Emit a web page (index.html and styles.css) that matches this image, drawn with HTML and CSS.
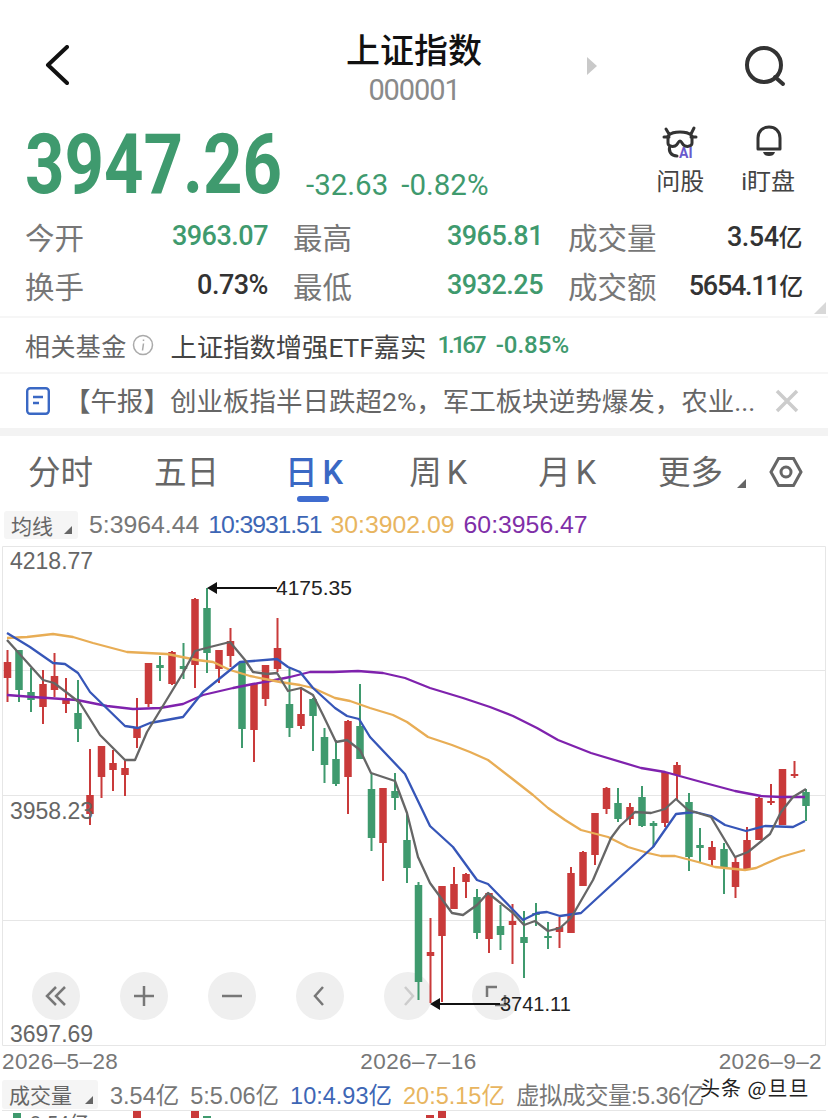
FILE: index.html
```html
<!DOCTYPE html>
<html lang="zh-CN">
<head>
  <meta charset="UTF-8" />
  <meta name="viewport" content="width=device-width, initial-scale=1.0"/>
  <title>上证指数</title>
  <link rel="stylesheet" href="styles.css">
</head>
<body>
  <div class="page">

    <header class="topbar">
      <svg class="back" width="24" height="40" viewBox="0 0 24 40"><path d="M22 2 3 20l19 18" /></svg>
      <div class="title">
        <h1>上证指数</h1>
        <div class="code">000001</div>
      </div>
      <div class="topbar-right">
        <span class="next-arrow"></span>
        <svg class="search" width="42" height="42" viewBox="0 0 42 42"><circle cx="20" cy="20" r="17" /><path d="M31 32l8 7" /></svg>
      </div>
    </header>

    <section class="quote">
      <div class="price">3947.26</div>
      <div class="change"><span>-32.63</span><span>-0.82%</span></div>
      <div class="quote-actions">
        <div class="action">
          <svg width="36" height="36" viewBox="0 0 36 36">
            <path class="ink" d="M4 4l3 5M32 3l-3 6M7 10C11 6 25 6 29 10M2 12h5M29 12h5" />
            <path class="ink" d="M6 11v7c0 3 4 4 7 3 3-1 3-5 5-5s2 4 5 5c3 1 7 0 7-3v-7M8 21c-2 5 1 10 7 10" />
            <text class="ai" x="17" y="33">AI</text>
          </svg>
          <span>问股</span>
        </div>
        <div class="action">
          <svg width="36" height="36" viewBox="0 0 36 36">
            <path class="ink" d="M8 24V13C8 6 13 2 19 2s11 4 11 11v11z" />
            <path class="fill" d="M13 27h12c-1 3-3 4-6 4s-5-1-6-4z" />
          </svg>
          <span>i盯盘</span>
        </div>
      </div>
    </section>

    <section class="stats">
      <div class="stat"><span class="label">今开</span><span class="value down">3963.07</span></div>
      <div class="stat"><span class="label">最高</span><span class="value down">3965.81</span></div>
      <div class="stat"><span class="label">成交量</span><span class="value">3.54<small>亿</small></span></div>
      <div class="stat"><span class="label">换手</span><span class="value">0.73%</span></div>
      <div class="stat"><span class="label">最低</span><span class="value down">3932.25</span></div>
      <div class="stat"><span class="label">成交额</span><span class="value value-tight">5654.11<small>亿</small></span></div>
      <span class="corner"></span>
    </section>

    <section class="fund">
      <span class="fund-label">相关基金</span>
      <svg class="info" width="22" height="22" viewBox="0 0 22 22"><circle cx="11" cy="11" r="9.5" /><path d="M11.5 5.5v1.5M11.5 9.5l-1 7" /></svg>
      <span class="fund-name">上证指数增强ETF嘉实</span>
      <span class="fund-num fund-price down">1.167</span>
      <span class="fund-num down">-0.85%</span>
    </section>

    <section class="news">
      <svg class="doc" width="24" height="28" viewBox="0 0 24 28"><rect x="1.2" y="1.2" width="21.6" height="25.6" rx="3" /><path d="M7 10h10M7 16h6" /></svg>
      <span class="news-text">【午报】创业板指半日跌超2%，军工板块逆势爆发，农业...</span>
      <svg class="close" width="24" height="24" viewBox="0 0 24 24"><path d="M2 2l20 20M22 2 2 22" /></svg>
    </section>

    <nav class="tabs">
      <span class="tab tab-1">分时</span>
      <span class="tab tab-2">五日</span>
      <span class="tab tab-3 active">日 K</span>
      <span class="tab tab-4">周 K</span>
      <span class="tab tab-5">月 K</span>
      <span class="tab tab-6">更多<i class="tri"></i></span>
      <svg class="hex" width="34" height="32" viewBox="0 0 34 32"><path d="M9.5 2.5h15L32 16l-7.500 13.500h-15L2 16z" /><circle cx="17" cy="16" r="5" /></svg>
    </nav>

    <div class="legend">
      <span class="pill">均线<i class="tri"></i></span>
      <span class="ma5">5:3964.44</span>
      <span class="ma10">10:3931.51</span>
      <span class="ma30">30:3902.09</span>
      <span class="ma60">60:3956.47</span>
    </div>

    <div class="chart">
      <div class="controls">
        <span class="ctl"><svg width="24" height="24" viewBox="0 0 24 24"><path d="M12 3 3 12l9 9M21 3l-9 9 9 9" /></svg></span>
        <span class="ctl"><svg width="24" height="24" viewBox="0 0 24 24"><path d="M12 2v20M2 12h20" /></svg></span>
        <span class="ctl"><svg width="24" height="24" viewBox="0 0 24 24"><path d="M2 12h20" /></svg></span>
        <span class="ctl"><svg width="24" height="24" viewBox="0 0 24 24"><path d="M15 3l-8 9 8 9" /></svg></span>
        <span class="ctl off"><svg width="24" height="24" viewBox="0 0 24 24"><path d="M9 3l8 9-8 9" /></svg></span>
        <span class="ctl"><svg width="24" height="24" viewBox="0 0 24 24"><path d="M3 13V3h10M21 11v10H11" /></svg></span>
      </div>

      <svg class="plot" width="828" height="500" viewBox="0 546 828 500">
        <path class="grid" d="M2.500 546.500H825.500V1045.500H2.500ZM3 670.500H825M3 795.500H825M3 920.500H825" />

        <path class="wick red" d="M7.500 650V702M43 670V724M54.500 653V697M66 678V713M90 749V825M101.500 746V798M113 750V791M125 760V796M137 698V748M148.500 663V707M172 651V685M195 598V688M219 650V683M230.500 628V667M254 683V762M265.500 665V706M277.500 618V672M301 687V729M348 720V814M383 788V881M430.500 918V1003M442 886V1002M454 867V909M466 873V898M489 893V953M512.500 904V964M559.500 917V948M571 867V933M583 851V886M595 813V865M606.500 787V814M630 803V825M665 772V827M677 762V800M712 841V867M735.500 857V898M747 827V869M759 797V840M771 784V805M782.500 769V825M794.500 761V778" />
        <path class="body red" d="M7.500 662V678M43 684V707M54.500 676V690M66 698V704M90 795V814M101.500 746V777M113 763V770M125 768V775M137 728V738M148.500 663V704M172 652V684M195 599V665M219 650V669M230.500 641V656M254 684V730M265.500 665V699M277.500 648V669M301 714V726M348 721V777M383 788V843M430.500 952V956M442 886V936M454 884V909M466 874V882M489 893V939M512.500 921V925M559.500 927V932M571 873V933M583 852V886M595 813V855M606.500 788V809M630 807V819M665 772V823M677 765V775M712 847V860M735.500 862V887M747 840V869M759 798V840M771 801V803M782.500 769V825M794.500 774V776" />
        <path class="wick green" d="M19 650V702M31 668V712M78 680V742M160 656V681M183.500 643V679M207 588V673M242 662V748M289.500 668V737M313 698V751M324.500 728V783M336 740V786M360 684V759M371.500 773V851M395 773V810M407 813V883M418.500 882V1000M477 889V939M500.500 905V950M524 911V978M536 903V926M548 922V949M618 788V822M642 786V827M653.500 821V847M689 793V871M700 828V863M724 843V894M806 789V821" />
        <path class="body green" d="M19 650V690M31 692V700M78 713V729M160 665V668M183.500 666V669M207 608V653M242 662V729M289.500 704V728M313 699V716M324.500 737V765M336 759V784M360 726V759M371.500 789V838M395 791V798M407 840V868M418.500 885V982M477 897V933M500.500 926V935M524 937V943M536 913V915M548 936V938M618 803V819M642 797V826M653.500 823V826M689 802V857M700 845V848M724 849V868M806 792V806" />

        <polyline class="line l60" points="7,695 33,697 77,700 107,706 133,709 160,708 183,704 203,695 233,688 253,684 270,681 290,677 310,672 333,672 358,671 383,673 405,678 430,688 463,698 490,707 513,716 537,728 558,740 591,753 641,768 665,772 705,783 735,791 761,796 781,797 805,797" />
        <polyline class="line l30" points="7,638 27,637 53,634 73,637 93,643 127,652 167,654 197,660 213,662 230,670 250,676 270,680 280,682 300,685 313,688 335,698 350,701 370,708 393,715 407,722 428,737 452,745 470,752 488,760 510,777 533,795 548,808 565,820 581,830 608,837 628,847 648,853 661,856 675,856 698,862 715,867 745,870 756,868 781,857 805,850" />
        <polyline class="line l10" points="7,633 30,647 53,663 65,664 78,673 90,692 125,726 138,728 150,723 183,717 203,692 240,662 253,661 277,659 288,667 300,672 313,688 335,708 347,716 359,719 370,737 405,774 430,826 453,847 477,880 488,884 523,920 537,913 547,912 560,916 581,913 606,890 653,847 676,814 695,812 711,816 725,825 746,831 765,826 793,827 805,821" />
        <polyline class="line l5" points="7,640 43,680 54,683 66,692 80,703 100,735 125,760 135,760 147,732 183,673 195,651 210,647 230,642 245,660 253,672 267,674 277,673 288,691 301,688 313,695 323,715 336,742 347,740 360,750 371,773 395,781 407,813 418,857 430,883 452,913 463,915 477,905 488,893 513,913 524,925 535,921 548,931 560,928 571,918 593,880 611,838 620,826 635,812 651,813 665,809 676,799 688,810 711,817 735,857 748,852 770,834 781,812 793,797 806,789" />

        <text class="axis" x="10" y="569">4218.77</text>
        <text class="axis" x="10" y="819">3958.23</text>
        <text class="axis" x="10" y="1042">3697.69</text>

        <path class="mark" d="M214 588H277M438 1004H500" />
        <path class="head" d="M207 588l10-6v12zM430 1004l10-6v12z" />
        <text class="peak" x="276" y="595">4175.35</text>
        <text class="peak peak-low" x="500" y="1011">3741.11</text>
      </svg>
    </div>

    <div class="dates">
      <span>2026–5–28</span>
      <span>2026–7–16</span>
      <span>2026–9–2</span>
    </div>

    <div class="volume">
      <span class="pill pill-wide">成交量<i class="tri"></i></span>
      <span class="ma5">3.54亿</span>
      <span class="ma5">5:5.06亿</span>
      <span class="ma10">10:4.93亿</span>
      <span class="ma30">20:5.15亿</span>
      <span class="ma5 vol-virtual">虚拟成交量:5.36亿</span>
      <span class="watermark">头条 @旦旦</span>
    </div>

    <div class="vol-strip">
      <span class="vol-axis">3.54亿</span>
      <i class="bar green-bar bar-a"></i>
      <i class="bar red-bar bar-b"></i>
      <i class="bar red-bar bar-c"></i>
      <i class="bar green-bar bar-d"></i>
      <i class="bar red-bar bar-e"></i>
      <i class="bar red-bar bar-f"></i>
    </div>
  </div>
</body>
</html>
```

FILE: styles.css
```css
* {
  box-sizing: border-box;
}
body {
  margin: 0;
  background-color: #fff;
  font-family: Roboto, "Noto Sans CJK SC", sans-serif;
  color: #333;
}
svg {
  display: block;
  fill: none;
}
.page {
  width: 828px;
  height: 1118px;
  overflow: hidden;
}
.down {
  color: #3f9a6e;
}

/* top bar */
.topbar {
  height: 120px;
  display: grid;
  grid-template-columns: 1fr auto 1fr;
  align-items: start;
}
.back {
  margin: 45px 0 0 45px;
}
.back path {
  stroke: #111;
  stroke-width: 4;
  stroke-linecap: round;
  stroke-linejoin: round;
}
.title {
  padding-top: 28px;
  text-align: center;
}
h1 {
  margin: 0;
  font-size: 34px;
  line-height: 46px;
  font-weight: 500;
  color: #111;
}
.code {
  font-size: 29px;
  line-height: 32px;
  color: #8a8a8a;
  letter-spacing: -1.100px;
}
.topbar-right {
  display: flex;
  justify-content: space-between;
  padding: 45px 42px 0 105px;
}
.next-arrow {
  margin-top: 12px;
  width: 0;
  height: 0;
  border-left: 10px solid #c9c9c9;
  border-top: 9px solid transparent;
  border-bottom: 9px solid transparent;
}
.search circle,
.search path {
  stroke: #333;
  stroke-width: 4;
  stroke-linecap: round;
}

/* price */
.quote {
  height: 91px;
  display: flex;
  align-items: flex-start;
  padding-left: 25px;
}
.price {
  width: 281px;
  font-size: 84px;
  line-height: 90px;
  font-weight: 700;
  color: #3f9a6e;
  transform: scaleX(0.82);
  transform-origin: left;
  white-space: nowrap;
}
.change {
  margin-top: 48px;
  display: flex;
  gap: 13px;
  font-size: 29.500px;
  line-height: 34px;
  color: #3f9a6e;
}
.quote-actions {
  margin-left: auto;
  margin-right: 33px;
  display: flex;
  gap: 37px;
  padding-top: 5px;
}
.action {
  display: flex;
  flex-direction: column;
  align-items: center;
  font-size: 24px;
  line-height: 32px;
  color: #444;
}
.action svg {
  margin-bottom: 5px;
}
.ink {
  stroke: #333;
  stroke-width: 3;
  stroke-linecap: round;
  stroke-linejoin: round;
}
.fill {
  fill: #333;
}
.ai {
  fill: #6a5acd;
  font-size: 14px;
  font-weight: 700;
}

/* stats */
.stats {
  position: relative;
  height: 105px;
  display: grid;
  grid-template-columns: 243px 250px 234px;
  column-gap: 25px;
  grid-auto-rows: 49px;
  padding-left: 25px;
}
.stat {
  display: flex;
  align-items: center;
  justify-content: space-between;
}
.label {
  font-size: 29.500px;
  color: #777;
}
.value {
  font-size: 27px;
  font-weight: 500;
  letter-spacing: -0.500px;
}
.value small {
  font-size: 24px;
}
.value-tight {
  letter-spacing: -1.300px;
}
.corner {
  position: absolute;
  right: 2px;
  bottom: 2px;
  width: 0;
  height: 0;
  border-left: 12px solid transparent;
  border-bottom: 12px solid #d8d8d8;
}

/* fund + news */
.fund {
  height: 58px;
  display: flex;
  align-items: center;
  padding-left: 25px;
  border-top: 2px solid #f6f6f6;
  border-bottom: 2px solid #f6f6f6;
}
.fund-label {
  font-size: 25px;
  letter-spacing: 0.400px;
  color: #666;
}
.info {
  margin: 0 17px 0 5px;
}
.info circle,
.info path {
  stroke: #aaa;
  stroke-width: 1.500;
}
.fund-name {
  font-size: 26.300px;
  color: #444;
  margin-right: 11px;
}
.fund-num {
  font-size: 24px;
  font-weight: 500;
}
.fund-price {
  letter-spacing: -3px;
  margin-right: 12px;
}
.news {
  height: 54px;
  display: flex;
  align-items: center;
  padding-left: 26px;
}
.doc rect,
.doc path {
  stroke: #3a68c4;
  stroke-width: 2.400;
}
.news-text {
  margin: -3px 0 0 14px;
  width: 711px;
  font-size: 26.500px;
  color: #666;
  white-space: nowrap;
}
.close {
  flex: none;
}
.close path {
  stroke: #ccc;
  stroke-width: 3.500;
}

/* tabs */
.tabs {
  position: relative;
  height: 82px;
  display: flex;
  align-items: center;
  border-top: 8px solid #f3f3f3;
}
.tab {
  position: relative;
  font-size: 32.500px;
  line-height: 44px;
  color: #666;
  white-space: nowrap;
  word-spacing: -3px;
}
.tab-1 {
  margin-left: 28px;
}
.tab-2 {
  margin-left: 61px;
}
.tab-3 {
  margin-left: 66px;
}
.tab-4 {
  margin-left: 66px;
}
.tab-5 {
  margin-left: 71px;
}
.tab-6 {
  margin-left: 62px;
}
.active {
  color: #3a68c4;
  font-weight: 500;
}
.active::after {
  content: "";
  position: absolute;
  left: 12px;
  right: 14px;
  bottom: -7px;
  height: 6px;
  border-radius: 3px;
  background-color: #3f6ccf;
}
.tri {
  position: absolute;
  right: -23px;
  bottom: 7px;
  width: 0;
  height: 0;
  border-left: 9px solid transparent;
  border-bottom: 9px solid #666;
}
.hex {
  position: absolute;
  left: 769px;
  top: 20px;
}
.hex path,
.hex circle {
  stroke: #666;
  stroke-width: 3;
}

/* legend rows */
.legend,
.volume {
  display: flex;
  align-items: center;
  font-family: "Liberation Sans", "Noto Sans CJK SC", sans-serif;
  white-space: nowrap;
}
.legend {
  height: 36px;
  gap: 9px;
  padding: 0 0 6px 4px;
  font-size: 24.800px;
}
.legend .ma10 {
  letter-spacing: -1.100px;
}
.pill {
  position: relative;
  width: 74px;
  height: 28px;
  padding-left: 7px;
  margin-right: 2px;
  border-radius: 3px;
  background-color: #f5f5f5;
  font-family: "Noto Sans CJK SC", sans-serif;
  font-size: 21px;
  line-height: 28px;
  color: #666;
}
.pill .tri {
  right: 6px;
  bottom: 5px;
  border-left-width: 8px;
  border-bottom-width: 8px;
}
.ma5 {
  color: #777;
}
.ma10 {
  color: #3d66b5;
}
.ma30 {
  color: #e8b560;
}
.ma60 {
  color: #7f2fa8;
}

/* chart */
.chart {
  position: relative;
  height: 500px;
}
.controls {
  position: absolute;
  left: 32px;
  top: 426px;
  display: flex;
  gap: 40px;
}
.ctl {
  width: 48px;
  height: 48px;
  display: flex;
  align-items: center;
  justify-content: center;
  border-radius: 50%;
  background-color: #efefef;
}
.ctl path {
  stroke: #777;
  stroke-width: 2.500;
}
.ctl.off path {
  stroke: #ccc;
}
.plot {
  position: relative;
}
.grid {
  stroke: #e6e6e6;
  stroke-width: 1;
}
.wick {
  stroke-width: 2;
}
.body {
  stroke-width: 7.500;
}
.red {
  stroke: #c93a3a;
}
.green {
  stroke: #3f9a6e;
}
.line {
  stroke-width: 2.300;
  stroke-linejoin: round;
}
.l5 {
  stroke: #666;
}
.l10 {
  stroke: #3656b8;
}
.l30 {
  stroke: #e8ad55;
}
.l60 {
  stroke: #7f22ad;
}
.axis {
  fill: #666;
  font-family: "Liberation Sans", sans-serif;
  font-size: 23px;
}
.peak {
  fill: #222;
  font-family: "Liberation Sans", sans-serif;
  font-size: 21px;
}
.peak-low {
  font-size: 20px;
}
.mark {
  stroke: #111;
  stroke-width: 2;
}
.head {
  fill: #111;
}

/* below the chart */
.dates {
  height: 32px;
  display: flex;
  justify-content: space-between;
  align-items: center;
  padding: 0 6px 0 2px;
  font-family: "Liberation Sans", sans-serif;
  font-size: 22.500px;
  letter-spacing: 0.400px;
  color: #777;
}
.volume {
  position: relative;
  height: 32px;
  gap: 11px;
  padding-left: 2px;
  font-size: 23.500px;
}
.vol-virtual {
  letter-spacing: -0.500px;
}
.pill-wide {
  width: 96px;
  height: 29px;
  margin-right: 1px;
}
.pill-wide .tri {
  right: 5px;
}
.watermark {
  position: absolute;
  left: 700px;
  top: -6px;
  font-family: "Noto Sans CJK SC", sans-serif;
  font-size: 20px;
  line-height: 32px;
  letter-spacing: 1px;
  color: #222;
  text-shadow: 0 0 2px #fff;
}
.vol-strip {
  position: relative;
  height: 12px;
  margin: 0 2px;
  overflow: hidden;
  border-top: 1px solid #e6e6e6;
}
.vol-axis {
  position: absolute;
  left: 28px;
  top: 0;
  font-size: 20px;
  line-height: 26px;
  color: #666;
}
.bar {
  position: absolute;
  top: 0;
  width: 8px;
  height: 12px;
}
.green-bar {
  background-color: #3f9a6e;
}
.red-bar {
  background-color: #c93a3a;
}
.bar-a {
  left: 11px;
  top: 2px;
}
.bar-b {
  left: 131px;
}
.bar-c {
  left: 189px;
}
.bar-d {
  left: 201px;
  top: 5px;
}
.bar-e {
  left: 424px;
  top: 4px;
}
.bar-f {
  left: 436px;
}
```
